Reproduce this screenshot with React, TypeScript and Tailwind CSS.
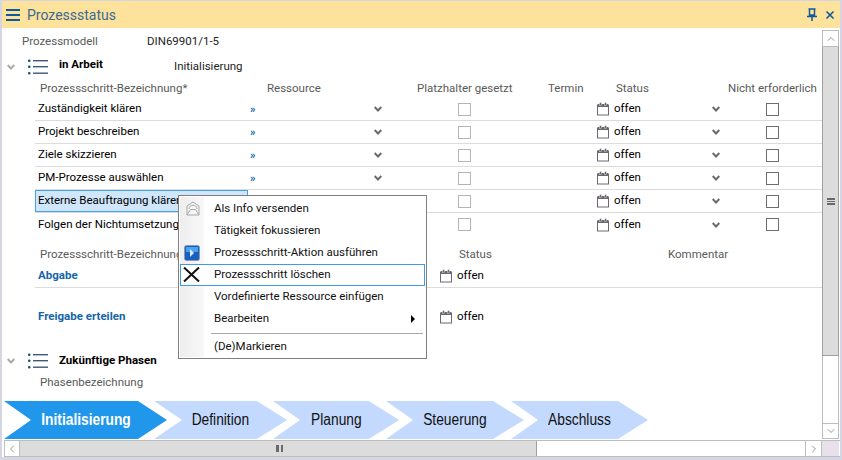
import { ChevronDown, ChevronLeft, ChevronRight, ChevronUp, X } from 'lucide-react';

const steps = [
  'Zuständigkeit klären',
  'Projekt beschreiben',
  'Ziele skizzieren',
  'PM-Prozesse auswählen',
  'Externe Beauftragung klären',
  'Folgen der Nichtumsetzung',
];

const menu = [
  'Als Info versenden',
  'Tätigkeit fokussieren',
  'Prozessschritt-Aktion ausführen',
  'Prozessschritt löschen',
  'Vordefinierte Ressource einfügen',
  'Bearbeiten',
];

function ListIcon() {
  return (
    <svg width="20" height="16" viewBox="0 0 20 16" className="shrink-0">
      <g fill="#1f4f82">
        <rect x="0" y="0.5" width="2.5" height="2.5" rx="1" />
        <rect x="0" y="6.5" width="2.5" height="2.5" rx="1" />
        <rect x="0" y="13" width="2.5" height="2.5" rx="1" />
      </g>
      <g fill="#3c5a7d">
        <rect x="5" y="1" width="15" height="1.4" />
        <rect x="5" y="7" width="15" height="1.4" />
        <rect x="5" y="13.5" width="15" height="1.4" />
      </g>
    </svg>
  );
}

function CalendarIcon() {
  return (
    <svg width="13" height="14" viewBox="0 0 13 14" className="shrink-0">
      <rect x="0.5" y="3.5" width="11" height="9.5" fill="#fff" stroke="#6d6870" />
      <rect x="0.5" y="2" width="11" height="3" fill="#6d6870" />
      <rect x="2.5" y="0.5" width="2" height="3" fill="#6d6870" stroke="#fff" strokeWidth="0.4" />
      <rect x="7.5" y="0.5" width="2" height="3" fill="#6d6870" stroke="#fff" strokeWidth="0.4" />
    </svg>
  );
}

function Chevron({ color = '#6a6a6a' }: { color?: string }) {
  return (
    <svg width="8" height="6" viewBox="0 0 8 6" className="shrink-0">
      <path d="M0.7 1 L4 4.5 L7.3 1" fill="none" stroke={color} strokeWidth="1.9" />
    </svg>
  );
}

function Row({ name, selected, link }: { name: string; selected: boolean; link: boolean }) {
  return (
    <div className="relative flex h-[23px] items-center border-b border-[#dcdcdc] last:border-b-0">
      <div
        className={
          selected
            ? 'flex h-[22px] w-[213px] shrink-0 items-center border border-[#45a0ea] bg-[#cfe6fb] pl-[2px] text-black'
            : 'flex h-[22px] w-[213px] shrink-0 items-center pl-[3px] text-black'
        }
      >
        {name}
      </div>
      <span className="ml-[2px] w-[124px] shrink-0 text-[11px] font-bold text-[#1565a8]">{link ? '»' : ''}</span>
      <Chevron />
      <div className="ml-[76px] h-[13px] w-[13px] shrink-0 border border-[#b4b4b4] bg-white" />
      <div className="ml-[126px] shrink-0">
        <CalendarIcon />
      </div>
      <span className="ml-[4px] w-[98px] shrink-0 text-black">offen</span>
      <Chevron />
      <div className="ml-[46px] h-[13px] w-[13px] shrink-0 border border-[#6e6e6e] bg-white" />
    </div>
  );
}

function ContextMenu() {
  return (
    <div className="absolute left-[176px] top-[194px] z-10 h-[164px] w-[249px] border border-[#7f7f7f] bg-white p-[1px] pt-[2px] text-[#111]">
      <div className="absolute bottom-[1px] left-[1px] top-[1px] w-[24px] bg-gradient-to-r from-[#eeeeee] to-[#f8f8f8]" />
      <div className="relative flex flex-col">
        {menu.map((label, i) => (
          <div
            key={label}
            className={
              i === 3
                ? 'relative flex h-[22px] items-center border border-[#3d9bea] bg-white pl-[33px]'
                : 'relative flex h-[22px] items-center pl-[34px]'
            }
          >
            {i === 0 && (
              <svg width="14" height="15" viewBox="0 0 14 15" className="absolute left-[6px] top-[3px]">
                <path d="M1 5 L7 1 L13 5 V14 H1 Z" fill="#f4f4f4" stroke="#a9a9a9" />
                <path d="M3 8 C3 3 11 3 11 8 M1 14 L4.5 8.5 H9.5 L13 14" fill="none" stroke="#a9a9a9" />
              </svg>
            )}
            {i === 2 && (
              <svg width="16" height="16" viewBox="0 0 16 16" className="absolute left-[4px] top-[3px]">
                <rect x="0.5" y="0.5" width="15" height="15" rx="2" fill="#1a5fc0" stroke="#8a9ab0" />
                <rect x="2" y="2" width="12" height="5" fill="#4ba3ee" />
                <path d="M6 4 L10 8 L6 12 Z" fill="#cfe9ff" />
              </svg>
            )}
            {i === 3 && (
              <svg width="17" height="15" viewBox="0 0 17 15" className="absolute left-[2px] top-[2px]">
                <path d="M1 0.5 L16 14.5 M16 0.5 L1 14.5" fill="none" stroke="#111" strokeWidth="2" />
              </svg>
            )}
            {label}
            {i === 5 && (
              <span className="absolute left-[231px] top-[7px] h-0 w-0 border-y-[4px] border-l-[4px] border-y-transparent border-l-black" />
            )}
          </div>
        ))}
        <div className="mb-[2px] ml-[31px] mr-[2px] mt-[3px] h-[1px] bg-[#a8a8a8]" />
        <div className="flex h-[22px] items-center pl-[34px]">(De)Markieren</div>
      </div>
    </div>
  );
}

function Phase({
  label,
  width,
  clip,
  active,
  shift,
}: {
  label: string;
  width: string;
  clip: string;
  active?: boolean;
  shift: string;
}) {
  return (
    <div
      className={`flex h-[38px] shrink-0 items-center justify-center font-['Liberation_Sans',sans-serif] text-[16px] ${width} ${clip} ${shift} ${
        active ? 'bg-[#2097ea] font-bold text-white' : 'bg-[#c3d9fd] text-[#111]'
      }`}
    >
      <span className="inline-block scale-x-[0.86]">{label}</span>
    </div>
  );
}

export default function App() {
  return (
    <div className="relative h-[460px] w-[842px] overflow-hidden border-x-[2px] border-b-[3px] border-t-[1px] border-[#d4d6e4] bg-white font-['Roboto',sans-serif] text-[11.5px] leading-none">
      <header className="flex h-[27px] items-center bg-[#fde29b] pl-[3px] pr-[3px] text-[#3b6a94]">
        <svg width="15" height="12" viewBox="0 0 15 12">
          <g fill="#0f5a9c">
            <rect x="1" y="0" width="14" height="2" />
            <rect x="1" y="5" width="14" height="2" />
            <rect x="1" y="10" width="14" height="2" />
          </g>
        </svg>
        <span className="ml-[7px] flex-1 text-[14px]">Prozessstatus</span>
        <svg width="12" height="14" viewBox="0 0 12 14" className="mr-[5px]">
          <path d="M2.5 1 H9.5 M3.5 1 V7 H8.5 V1 M1 8.5 H11 M6 8.5 V13" fill="none" stroke="#0f5a9c" strokeWidth="1.5" />
        </svg>
        <X size={14} strokeWidth={2.8} color="#0f5a9c" strokeLinecap="butt" />
      </header>

      <div className="flex h-[412px]">
        <main className="flex w-[820px] flex-col">
          <div className="flex h-[28px] items-center pb-[1px] pt-[1px] text-[#5a5a5a]">
            <span className="ml-[20px] w-[125px]">Prozessmodell</span>
            <span className="text-[#222]">DIN69901/1-5</span>
          </div>

          <div className="flex h-[22px] items-center">
            <span className="ml-[5px]">
              <Chevron color="#aaaaaa" />
            </span>
            <span className="ml-[13px]">
              <ListIcon />
            </span>
            <span className="mb-[4px] ml-[11px] w-[115px] font-bold text-black">in Arbeit</span>
            <span className="text-[#222]">Initialisierung</span>
          </div>

          <div className="flex h-[20px] items-center pt-[1px] text-[#5a5a5a]">
            <span className="ml-[38px] w-[227px]">Prozessschritt-Bezeichnung*</span>
            <span className="w-[150px]">Ressource</span>
            <span className="w-[131px]">Platzhalter gesetzt</span>
            <span className="w-[68px]">Termin</span>
            <span className="w-[112px]">Status</span>
            <span>Nicht erforderlich</span>
          </div>

          <div className="ml-[33px] flex flex-col">
            {steps.map((s, i) => (
              <Row key={s} name={s} selected={i === 4} link={i < 4} />
            ))}
          </div>

          <div className="mt-[8px] flex h-[23px] items-center pb-[1px] text-[#5a5a5a]">
            <span className="ml-[38px] w-[419px]">Prozessschritt-Bezeichnung</span>
            <span className="w-[209px]">Status</span>
            <span>Kommentar</span>
          </div>

          <div className="ml-[33px] flex h-[21px] items-center border-b border-[#dcdcdc] pb-[3px]">
            <span className="ml-[3px] w-[402px] font-bold text-[#1565a8]">Abgabe</span>
            <CalendarIcon />
            <span className="ml-[4px] text-black">offen</span>
          </div>
          <div className="ml-[33px] flex h-[42px] items-center pt-[16px]">
            <span className="ml-[3px] w-[402px] font-bold text-[#1565a8]">Freigabe erteilen</span>
            <CalendarIcon />
            <span className="ml-[4px] text-black">offen</span>
          </div>

          <div className="mt-[20px] flex h-[22px] items-center">
            <span className="ml-[5px]">
              <Chevron color="#aaaaaa" />
            </span>
            <span className="ml-[13px]">
              <ListIcon />
            </span>
            <span className="ml-[11px] font-bold text-black">Zukünftige Phasen</span>
          </div>
          <div className="flex h-[22px] items-center text-[#5a5a5a]">
            <span className="ml-[38px]">Phasenbezeichnung</span>
          </div>

          <div className="mt-[7px] flex pl-[2px]">
            <Phase label="Initialisierung" width="w-[163px]" clip="[clip-path:polygon(0_0,134px_0,100%_50%,134px_100%,0_100%,27px_50%)]" shift="pl-[10px] pr-[8px]" active />
            <Phase label="Definition" width="w-[133px]" clip="[clip-path:polygon(0_0,103px_0,100%_50%,103px_100%,0_100%,28px_50%)]" shift="-ml-[13px]" />
            <Phase label="Planung" width="w-[126px]" clip="[clip-path:polygon(0_0,96px_0,100%_50%,96px_100%,0_100%,27px_50%)]" shift="-ml-[14px]" />
            <Phase label="Steuerung" width="w-[138px]" clip="[clip-path:polygon(0_0,107px_0,100%_50%,107px_100%,0_100%,27px_50%)]" shift="-ml-[13px]" />
            <Phase label="Abschluss" width="w-[137px]" clip="[clip-path:polygon(0_0,107px_0,100%_50%,107px_100%,0_100%,27px_50%)]" shift="-ml-[13px]" />
          </div>
        </main>

        <aside className="mb-[1px] mt-[2px] flex w-[17px] flex-col border-x border-[#bdbdbd]">
          <div className="flex h-[17px] shrink-0 items-center justify-center border-y border-[#bdbdbd] bg-white">
            <ChevronUp size={12} strokeWidth={1.5} color="#777" />
          </div>
          <div className="-mx-[1px] flex h-[309px] shrink-0 items-center justify-center border border-t-0 border-[#a0a0a0] bg-[#dcdcdc]">
            <div className="h-[7px] w-[8px] border-y-[2px] border-[#6a6a6a] after:mt-[1.5px] after:block after:h-[1px] after:bg-[#6a6a6a]" />
          </div>
          <div className="flex-1 bg-white" />
          <div className="flex h-[16px] shrink-0 items-center justify-center border-y border-[#bdbdbd] bg-white">
            <ChevronDown size={12} strokeWidth={1.5} color="#777" />
          </div>
        </aside>
      </div>

      <footer className="ml-[2px] flex h-[17px] border-y border-[#bdbdbd]">
        <div className="flex w-[16px] items-center justify-center border-x border-[#bdbdbd] bg-white">
          <ChevronLeft size={12} strokeWidth={1.5} color="#777" />
        </div>
        <div className="flex w-[517px] items-center justify-center border-r border-[#a0a0a0] bg-[#dcdcdc] pl-[2px]">
          <div className="h-[7px] w-[7px] border-x-[2px] border-[#6a6a6a] after:ml-[0.5px] after:block after:h-full after:w-[1px] after:bg-[#6a6a6a]" />
        </div>
        <div className="w-[268px] bg-white" />
        <div className="flex w-[17px] items-center justify-center border-x border-[#bdbdbd] bg-white">
          <ChevronRight size={12} strokeWidth={1.5} color="#777" />
        </div>
        <div className="w-[17px] bg-[#e8e0ea]" />
      </footer>

      <ContextMenu />
    </div>
  );
}
